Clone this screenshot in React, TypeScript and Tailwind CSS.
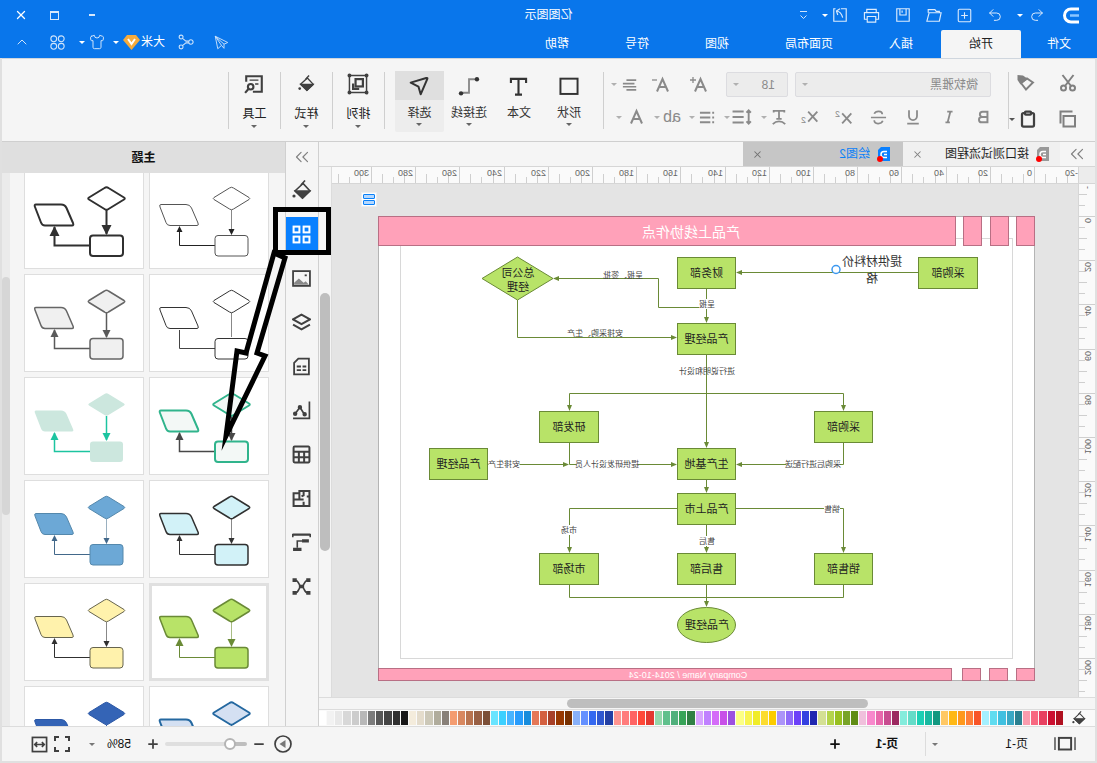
import type { ReactNode } from "react"
import { ChevronsRight, ChevronUp, Clipboard, Minus, Plus, Redo2, Shirt, Undo2, X } from "lucide-react"

const GREEN = "#b8e368"
const LINE = "#6a8a36"

const menuTabs = ["插入", "页面布局", "视图", "符号", "帮助"]

const swatches = [
  "#b01020", "#cc1030", "#e84060", "#f86880", "#fa9cae",
  "#2a8090", "#3aa8c4", "#40c0e0", "#60dcf0", "#a4f0ff",
  "#f85428", "#ff7f38", "#ff981c", "#ffb814", "#ffc864",
  "#129880", "#18b8a0", "#1ccfb4", "#64dcc8", "#84ecdc",
  "#9c2860", "#c84c90", "#e868ac", "#f888cc", "#f0c0dc",
  "#608c14", "#78a428", "#98c020", "#b4d44c", "#d4e094",
  "#2028b0", "#3440e0", "#6c40f8", "#906cf8", "#ac94f8",
  "#fccc00", "#fcdc30", "#f0ec28", "#f8f450", "#fcff84",
  "#9c50e0", "#c850e8", "#d46cf8", "#c080ff", "#d8a4ff",
  "#308044", "#38a458", "#50b07c", "#60c08c", "#94d8ac",
  "#e43830", "#ff4838", "#ff6464", "#ff7c7c", "#ff9490",
  "#2440a4", "#3058d0", "#3468f0", "#6490ff", "#88b0f8",
  "#783000", "#983800", "#a84028", "#d46040", "#e47858",
  "#188cdc", "#289cfc", "#48b4ff", "#3cd0ff", "#68e4ff",
  "#7c5038", "#986044", "#b87450", "#d88860", "#f49c70",
  "#888078", "#b0ac9c", "#ccc8b8", "#e4dccc", "#f4ecdc",
  "#181818", "#303030", "#444444", "#585858", "#7c7c7c",
  "#b8b8b8", "#cccccc", "#d8d8d8", "#e8e8e8", "#f2f2f2", "#ffffff",
]

type Theme = {
  fill: string
  stroke: string
  width: number
  line: string
  down?: string
  lineWidth?: number
  arrow?: number
  selected?: boolean
}

const themes: Theme[] = [
  { fill: "#fff", stroke: "#555", width: 1, line: "#222", down: "#888", arrow: 3 },
  { fill: "#fff", stroke: "#303030", width: 2, line: "#303030", lineWidth: 2, arrow: 5 },
  { fill: "#fff", stroke: "#333", width: 1, line: "#444", down: "#888", arrow: 0 },
  { fill: "#f0f0f0", stroke: "#666", width: 1.5, line: "#5a5a5a", lineWidth: 1.5, arrow: 4 },
  { fill: "#f3f8f6", stroke: "#30b48c", width: 2, line: "#484848", lineWidth: 1.5, arrow: 4 },
  { fill: "#cce7de", stroke: "none", width: 0, line: "#1cc4a0", lineWidth: 1.5, arrow: 4 },
  { fill: "#d2f2f8", stroke: "#303030", width: 1.5, line: "#333", down: "#888", arrow: 3 },
  { fill: "#6ca8d6", stroke: "#5488ac", width: 1, line: "#42688a", down: "#9ab0c0", arrow: 3 },
  { fill: GREEN, stroke: LINE, width: 1.5, line: LINE, down: "#a9bd84", arrow: 4, selected: true },
  { fill: "#fff2ac", stroke: "#66644e", width: 1, line: "#303030", down: "#888", arrow: 3 },
  { fill: "#d4e0f2", stroke: "#2468a0", width: 2, line: "#2468a0", arrow: 3 },
  { fill: "#3464b6", stroke: "#2c58a6", width: 1, line: "#2c58a6", arrow: 3 },
]

const nodes = [
  { x: 57, y: 41, w: 60, text: "采购部" },
  { x: 299, y: 41, w: 59, text: "财务部" },
  { x: 299, y: 107, w: 59, text: "产品经理" },
  { x: 162, y: 195, w: 59, text: "采购部" },
  { x: 436, y: 195, w: 60, text: "研发部" },
  { x: 299, y: 232, w: 59, text: "生产基地" },
  { x: 547, y: 232, w: 59, text: "产品经理" },
  { x: 299, y: 277, w: 59, text: "产品上市" },
  { x: 162, y: 337, w: 59, text: "销售部" },
  { x: 299, y: 337, w: 59, text: "售后部" },
  { x: 436, y: 337, w: 60, text: "市场部" },
]

// Connectors that end in an arrow head
const arrows = [
  "M117 56.5H298",
  "M328.5 72V106",
  "M328.5 91.5H376.5V62.5H481",
  "M517.5 84V121.5H359",
  "M328.5 139V231",
  "M328.5 177.5H191.5V194",
  "M328.5 177.5H465.5V194",
  "M191.5 226V248.5H298",
  "M547 248.5H467",
  "M465.5 226V248.5H359",
  "M328.5 263V276",
  "M299 292.5H191.5V336",
  "M358 292.5H465.5V336",
  "M328.5 308V336",
  "M328.5 368V390",
]

const labels = [
  { x: 412, y: 59, w: 0, text: "呈报、签批" },
  { x: 328, y: 88, w: 16, text: "呈报" },
  { x: 440, y: 117, w: 0, text: "安排采购、生产" },
  { x: 328, y: 155, w: 0, text: "进行说明和设计" },
  { x: 222, y: 248, w: 53, text: "采购后进行配送" },
  { x: 428, y: 248, w: 61, text: "提供研发设计人员" },
  { x: 531, y: 248, w: 31, text: "安排生产" },
  { x: 203, y: 293, w: 16, text: "销售" },
  { x: 466, y: 314, w: 16, text: "市场" },
  { x: 328, y: 325, w: 16, text: "售后" },
]

function Icon({ size = 18, width = 1.5, children, className }: { size?: number; width?: number; children: ReactNode; className?: string }) {
  return (
    <svg width={size} height={size} viewBox="0 0 18 18" fill="none" stroke="currentColor" strokeWidth={width} className={className} aria-hidden="true">
      {children}
    </svg>
  )
}

function Caret({ className = "text-[#8a8a8a]" }: { className?: string }) {
  return (
    <svg width="6" height="3" viewBox="0 0 6 3" className={`shrink-0 ${className}`} aria-hidden="true">
      <path d="M0 0H6L3 3Z" fill="currentColor" />
    </svg>
  )
}

function Logo({ className }: { className: string }) {
  return (
    <svg width="16" height="17" viewBox="0 0 16 17" fill="none" stroke="white" strokeWidth="3" className={className} aria-hidden="true">
      <path d="M0 2H8A6.5 6.5 0 0 1 8 15H0" />
      <path d="M0 8.5H9" stroke="#8cc6ff" strokeWidth="2.5" />
    </svg>
  )
}

function PaintBucket({ size = 20 }: { size?: number }) {
  return (
    <svg width={size} height={size} viewBox="0 0 20 20" fill="none" stroke="currentColor" strokeWidth="1.6" aria-hidden="true">
      <path d="M9 3.5L17 11L9.5 18L2 11Z" />
      <path d="M2.5 11H16.5L9.5 18Z" fill="currentColor" />
      <path d="M7 0.500L11 5" />
      <circle cx="18" cy="16" r="1.6" fill="currentColor" stroke="none" />
    </svg>
  )
}

function DocIcon({ color }: { color: string }) {
  return (
    <span className="relative block">
      <svg width="12" height="14" viewBox="0 0 12 14" aria-hidden="true">
        <path d="M0 0H9L12 3V14H0Z" fill={color} />
        <path d="M3 4.5H6A3 3 0 0 1 6 10.5H3M3 7.5H6" fill="none" stroke="white" strokeWidth="1.5" />
      </svg>
      <span className="absolute -right-px -bottom-px size-[6px] rounded-full bg-[#ff0000]" />
    </span>
  )
}

function TitleBar() {
  const quick: { label: string; icon: ReactNode }[] = [
    { label: "重做", icon: <Redo2 size={16} strokeWidth={1.5} /> },
    { label: "新建", icon: <Icon size={15} width={1.3}><rect x="1.5" y="1.5" width="15" height="15" rx="1.5" /><path d="M9 5V13M5 9H13" /></Icon> },
    { label: "打开", icon: <Icon size={16} width={1.3}><path d="M15.500 6.500V3H8L6.500 5H3V6.500M1 6.500H14.500L17 16H3Z" /></Icon> },
    { label: "保存", icon: <Icon size={16} width={1.3}><path d="M2 2H16V16H2ZM5.500 2V9H12.500V2M10 4V6.500" /></Icon> },
    { label: "打印", icon: <Icon size={17} width={1.2}><path d="M4 6V2.500H14V6M4 13H1.500V6H16.500V13H14M4.500 10H13.500V16H4.500Z" /></Icon> },
    { label: "导出", icon: <Icon size={16} width={1.3}><path d="M8 2H2V16H16V2H14M6 12C7 8 9 5 13 4.500M9 2L13 4.500L11.500 9" /></Icon> },
  ]
  return (
    <header className="bg-[#0976eb] text-white">
      <div className="relative flex h-[30px] items-center">
        <Logo className="ml-[18px]" />
        <button aria-label="撤销" className="ml-[18px] text-[#dcebfd]"><Undo2 size={16} strokeWidth={1.5} /></button>
        <Caret className="ml-1.5 text-white" />
        <div className="ml-[14px] flex items-center gap-[15px] text-[#dcebfd]">
          {quick.map((q) => (
            <button key={q.label} aria-label={q.label}>{q.icon}</button>
          ))}
        </div>
        <Caret className="ml-1 text-white" />
        <button aria-label="自定义" className="ml-[14px]">
          <svg width="9" height="9" viewBox="0 0 9 9" fill="none" stroke="#cfe4fb" aria-hidden="true"><path d="M1 .5H8M1.500 4.500L4.500 7.500L7.500 4.500" /></svg>
        </button>
        <h1 className="pointer-events-none absolute inset-x-0 text-center text-[12px]">亿图图示</h1>
        <div className="ml-auto flex items-center gap-[22px] pr-[14px]">
          <button aria-label="最小化" className="mr-1 h-0.5 w-1.5 bg-[#d6e8fc]" />
          <button aria-label="最大化" className="ml-1 size-[9px] border border-t-2 border-[#d6e8fc]" />
          <button aria-label="关闭"><X size={14} strokeWidth={2.200} /></button>
        </div>
      </div>
      <div className="flex h-7 items-center text-[12px]">
        <nav className="flex h-full">
          <a href="#" className="flex w-[76px] items-center justify-center">文件</a>
          <a href="#" className="flex w-20 items-center justify-center rounded-t-[2px] bg-[#f5f5f5] text-[#222]">开始</a>
          {menuTabs.map((t) => (
            <a key={t} href="#" className="flex items-center px-7">{t}</a>
          ))}
        </nav>
        <div className="mb-1 ml-auto flex items-center pr-[14px] text-[#cfe4fb]">
          <button aria-label="发送"><Icon size={15} width={1.1}><path d="M16.500 1.500L1.500 9L6 11V16L9 12.500L13.500 16.500ZM6 11L16.500 1.500L9 12.500" /></Icon></button>
          <button aria-label="分享" className="ml-5"><Icon size={16} width={1.200}><circle cx="3.500" cy="9" r="2.500" /><circle cx="14.500" cy="3.500" r="2.200" /><circle cx="14.500" cy="14.500" r="2.200" /><path d="M6 8L9 8L13 5M6 10H9L13 13" /></Icon></button>
          <button className="ml-[13px] flex items-center text-white">
            大米
            <svg width="17" height="15" viewBox="0 0 17 15" className="ml-px" aria-hidden="true">
              <path d="M4 0H13L17 5L8.500 15L0 5Z" fill="#f6ab3c" />
              <path d="M5 4L8.500 9L12 4" fill="none" stroke="white" strokeWidth="2" />
            </svg>
          </button>
          <Caret className="ml-1 text-white" />
          <button aria-label="皮肤" className="ml-2"><Shirt size={16} strokeWidth={1.500} /></button>
          <Caret className="ml-1 text-white" />
          <button aria-label="应用" className="ml-[14px]"><Icon size={15} width={1.300}><circle cx="4.500" cy="4.500" r="3.500" /><circle cx="13.500" cy="4.500" r="3.500" /><circle cx="4.500" cy="13.500" r="3.500" /><circle cx="13.500" cy="13.500" r="3.500" /></Icon></button>
          <button aria-label="收起" className="ml-5"><ChevronUp size={16} strokeWidth={1.500} /></button>
        </div>
      </div>
    </header>
  )
}

function LetterA({ sign }: { sign?: string }) {
  return (
    <Icon width={1.300}>
      <path d="M2 15.500L7.500 3L13 15.500M4 11H11" strokeWidth="2" />
      {sign === "+" && <path d="M12 4H18M15 1V7" />}
      {sign === "-" && <path d="M13 4H18" />}
    </Icon>
  )
}

const bigButtons = [
  { label: "形状", caret: true, icon: <Icon size={22} width={1.600}><rect x="2" y="3" width="14" height="12.500" /></Icon> },
  { label: "文本", caret: false, icon: <Icon size={21} width={1.800}><path d="M2.500 6V2.500H15.500V6M9 2.500V16M6 16H12" /></Icon> },
  { label: "连接线", caret: true, icon: <Icon size={22} width={1.500}><path d="M4 3.500H9V14.500H14" stroke="#888" /><circle cx="2.500" cy="3.500" r="1.800" fill="currentColor" stroke="none" /><circle cx="15.500" cy="15" r="1.800" fill="currentColor" stroke="none" /></Icon> },
]

const groupButtons = [
  { label: "排列", icon: <Icon size={22} width={1.200}><path d="M2 2H16V16H2Z" /><rect x="5" y="5" width="6" height="6" strokeWidth="1.800" /><path d="M13 8.500V13H8" strokeWidth="1.800" /><circle cx="2" cy="2" r="1" /><circle cx="16" cy="2" r="1" /><circle cx="2" cy="16" r="1" /><circle cx="16" cy="16" r="1" /></Icon> },
  { label: "样式", icon: <PaintBucket size={17} /> },
  { label: "工具", icon: <Icon size={20} width={1.900}><path d="M10 16H2V2H16V7" /><path d="M5 5.500H13M5 9H8" strokeWidth="1.300" /><circle cx="12" cy="11.500" r="2.500" /><path d="M14 13.500L17 17" /></Icon> },
]

function Divider() {
  return <div className="h-[57px] w-px bg-[#cfcfcf]" />
}

function Ribbon() {
  return (
    <section className="flex h-[84px] shrink-0 border-t border-b border-t-[#cfd6de] border-b-[#cfcfcf] bg-[#f5f5f5] pt-[13px] text-[12px] text-[#404040]">
      <div className="grid h-[57px] w-[86px] grid-cols-[1fr_1fr] content-between justify-items-start pt-0.5 pb-px pl-[18px] text-[#808080]">
        <button aria-label="剪切"><Icon size={18} width={2}><path d="M3.500 1L12 12M14.500 1L6 12" /><circle cx="4.500" cy="14" r="2.500" /><circle cx="13.500" cy="14" r="2.500" /></Icon></button>
        <button aria-label="格式刷" className="ml-2">
          <Icon size={18}><path d="M2 8.500L8 4.500L14 9L9 15.500Z" strokeWidth="2" /><path d="M7 5L12 1.500L17.500 1V6L14.500 10.500Z" fill="currentColor" stroke="none" /></Icon>
        </button>
        <button aria-label="复制"><Icon size={18} width={2}><path d="M4.500 6H13.500V16.500H2V6Z" /><path d="M4.500 1.500H16.500V13.500" /></Icon></button>
        <button aria-label="粘贴" className="ml-1.5 flex items-center gap-1 text-[#404040]"><Clipboard size={18} strokeWidth={3} /><Caret className="text-[#555]" /></button>
      </div>
      <Divider />
      <div className="flex h-[57px] w-[404px] flex-col justify-between pl-[17px] text-[#8a8a8a]">
        <div className="flex items-center">
          <div className="relative">
            <select aria-label="字体" className="h-[25px] w-[196px] appearance-none rounded-[2px] border border-[#dcdce0] bg-[#ececec] pl-3">
              <option>微软雅黑</option>
            </select>
            <Caret className="absolute top-[11px] right-[7px] text-[#b0b0b0]" />
          </div>
          <div className="relative ml-[7px]">
            <select aria-label="字号" className="h-[25px] w-[62px] appearance-none rounded-[2px] border border-[#dcdce0] bg-[#ececec] pl-3">
              <option>18</option>
            </select>
            <Caret className="absolute top-[11px] right-[7px] text-[#b0b0b0]" />
          </div>
          <button aria-label="增大字号" className="ml-[18px]"><LetterA sign="+" /></button>
          <button aria-label="减小字号" className="ml-5"><LetterA sign="-" /></button>
          <button aria-label="对齐" className="ml-[14px] flex items-center gap-[5px]"><Icon size={16} width={1.800}><path d="M2 3.500H13M4 7.500H17M2 11H17M2 14.500H13" /></Icon><Caret className="text-[#b0b0b0]" /></button>
        </div>
        <div className="flex h-6 items-center">
          <button aria-label="加粗" className="w-4"><Icon size={16} width={2.200}><path d="M4 3H9.500A3 3 0 0 1 9.500 9H4ZM4 9H10.500A3 3 0 0 1 10.500 15H4Z" /></Icon></button>
          <button aria-label="斜体" className="ml-[18px]"><Icon size={16} width={2}><path d="M5 3H11M7.500 3L10.500 15M8 15H13" /></Icon></button>
          <button aria-label="下划线" className="ml-5"><Icon size={16} width={2}><path d="M4.500 1.500V8A4.500 4.500 0 0 0 13.500 8V1.500M2.500 16.500H15.500" /></Icon></button>
          <button aria-label="删除线" className="ml-[18px]"><Icon size={17} width={1.800}><path d="M13.500 5C12 1.500 5 1.500 5 5.500M1 9H17M4.500 12.500C6 16.500 13.500 16.500 13.500 12" /></Icon></button>
          <button aria-label="上标" className="ml-[17px] flex w-5 items-start"><Icon size={15} width={2.200}><path d="M2 4L13 16M13 4L2 16" /></Icon><span className="-ml-0.5 text-[9px] leading-none">2</span></button>
          <button aria-label="下标" className="ml-[14px] flex w-5 items-end"><Icon size={15} width={2.200}><path d="M2 2L13 14M13 2L2 14" /></Icon><span className="-ml-0.5 text-[9px] leading-none">2</span></button>
          <button aria-label="文字样式" className="ml-3 flex items-center gap-1"><Icon size={16} width={2}><path d="M3 4V2H15V4M9 2V11M6 11H12M2 17C6 13 12 13 16 17" /></Icon><Caret className="text-[#b0b0b0]" /></button>
          <button aria-label="行距" className="ml-[9px] flex items-center gap-0.5"><Icon size={20} width={1.700}><path d="M3 3V15M1 5L3 3L5 5M1 13L3 15L5 13M7.500 4H17.500M7.500 9H17.500M7.500 14H17.500" /></Icon><Caret className="text-[#b0b0b0]" /></button>
          <button aria-label="列表" className="ml-2 flex items-center gap-1"><Icon size={17} width={2}><path d="M2 4H4M2 9H4M2 14H4M6 4H17M6 9H17M6 14H17" /></Icon><Caret className="text-[#b0b0b0]" /></button>
          <button aria-label="大小写" className="ml-2 flex items-center gap-[3px]"><span className="text-[16px] leading-none">ab</span><Caret className="text-[#b0b0b0]" /></button>
          <button aria-label="字体颜色" className="ml-2.5 flex items-center gap-1"><LetterA /><Caret className="text-[#b0b0b0]" /></button>
        </div>
      </div>
      <Divider />
      <div className="flex pl-[9px]">
        {bigButtons.map((b) => (
          <button key={b.label} className="flex h-[60px] w-[50px] flex-col items-center pt-[3px] text-[#333]">
            <span className="flex h-[22px] items-center">{b.icon}</span>
            <span className="mt-2 leading-4">{b.label}</span>
            {b.caret && <Caret className="mt-0.5 text-[#666]" />}
          </button>
        ))}
        <button className="-mt-px flex h-[61px] w-[49px] flex-col items-center rounded-[2px] bg-[#ededed] text-[#333]">
          <span className="flex h-[29px] w-full items-center justify-center bg-[#dfdfdf]">
            <Icon size={20} width={1.800}><path d="M1.500 2.500Q1 1.500 2.500 1.800L16.500 6L9.500 9.500L7.500 16.500Z" strokeLinejoin="round" /></Icon>
          </span>
          <span className="mt-[5px] leading-4">选择</span>
          <Caret className="mt-0.5 text-[#666]" />
        </button>
      </div>
      <div className="flex pl-[10px]">
        {groupButtons.map((b) => (
          <div key={b.label} className="flex">
            <Divider />
            <button className="flex h-[57px] w-[51px] flex-col items-center text-[#222]">
              <span className="flex h-[23px] items-center text-[#404040]">{b.icon}</span>
              <span className="mt-[11px] leading-4">{b.label}</span>
              <Caret className="mt-[3px] text-[#666]" />
            </button>
          </div>
        ))}
        <Divider />
      </div>
    </section>
  )
}

function DocumentTabs() {
  return (
    <div className="flex h-[25px] shrink-0 border-b border-[#d6d6d6] bg-[#f5f5f5] text-[12px]">
      <button aria-label="展开" className="flex w-[35px] items-center justify-center text-[#808080]"><ChevronsRight size={22} strokeWidth={1.300} /></button>
      <div className="flex w-[157px] items-center bg-[#f0f0f0] pl-[11px] text-[#222]">
        <DocIcon color="#999" />
        <span className="ml-2">接口测试流程图</span>
        <button aria-label="关闭标签" className="mr-[9px] ml-auto text-[#808080]"><X size={11} strokeWidth={2.200} /></button>
      </div>
      <div className="flex w-40 items-center bg-[#c6c6c6] pl-[13px] text-[#0980f8]">
        <DocIcon color="#0980ff" />
        <span className="ml-2">绘图2</span>
        <button aria-label="关闭标签" className="mr-[9px] ml-auto text-[#707070]"><X size={11} strokeWidth={2.200} /></button>
      </div>
    </div>
  )
}

// Ruler marks: a long one every 20 units, shorter ones every 5
function HorizontalRuler() {
  const marks = Array.from({ length: 69 }, (_, i) => i - 4)
  return (
    <svg width="100%" height="16" className="block min-w-0 flex-1 bg-[#fafafa]" aria-hidden="true">
      {marks.map((i) => {
        const x = Math.round(43 + i * 11.050) + 0.5
        const top = i % 4 === 0 ? 0 : i % 2 === 0 ? 10 : 7
        return <path key={i} d={`M${x} ${top}V16`} stroke="#cfcfcf" />
      })}
      {marks.filter((i) => i % 4 === 0 && i <= 60).map((i) => (
        <text key={i} x={Math.round(43 + i * 11.050) + (i < 0 ? 1 : 3)} y="9" fontSize="9" fill="#666">{i * 5}</text>
      ))}
    </svg>
  )
}

function VerticalRuler() {
  const marks = Array.from({ length: 46 }, (_, i) => i - 2)
  return (
    <svg width="17" height="100%" className="block shrink-0 border-r border-[#d6d6d6] bg-[#fafafa]" aria-hidden="true">
      <text transform="translate(10 5) rotate(-90)" fontSize="9" fill="#666">-</text>
      {marks.map((i) => {
        const y = Math.round(32 + i * 11.050) + 0.5
        const left = i % 4 === 0 ? 0 : i % 2 === 0 ? 8 : 10
        return <path key={i} d={`M${left} ${y}H17`} stroke="#cfcfcf" />
      })}
      {marks.filter((i) => i % 4 === 0 && i <= 40).map((i) => (
        <text key={i} transform={`translate(10 ${Math.round(32 + i * 11.050) + 2}) rotate(-90)`} fontSize="9" textAnchor="end" fill="#666">{i * 5}</text>
      ))}
    </svg>
  )
}

function Diagram() {
  return (
    <svg width="657" height="466" viewBox="0 0 657 466" className="absolute top-[32px] left-[43px]" fill="none" role="img" aria-label="产品上线协作点">
      <defs>
        <marker id="head" viewBox="0 0 6 6" refX="5" refY="3" markerWidth="6" markerHeight="6" markerUnits="userSpaceOnUse" orient="auto">
          <path d="M0 0.500L6 3L0 5.500Z" fill={LINE} />
        </marker>
      </defs>
      <rect x="0.500" y="0.500" width="656" height="464" fill="white" stroke="#b4b4b4" />
      <rect x="22.500" y="22.500" width="612" height="420" stroke="#d8d8d8" />
      <g fill="#ffa1b9" stroke="#b86f84">
        {[0, 26, 53].map((x) => <rect key={x} x={x + 0.500} y="0.500" width="18" height="29" />)}
        <rect x="79.500" y="0.500" width="577" height="29" />
        {[0, 27, 54].map((x) => <rect key={x} x={x + 0.500} y="452.500" width="18" height="12" />)}
        <rect x="83.500" y="452.500" width="573" height="12" />
      </g>
      <g stroke={LINE}>
        {arrows.map((d) => <path key={d} d={d} markerEnd="url(#head)" />)}
        <path d="M191.500 368V381.500H465.500V368" />
        <g fill={GREEN}>
          {nodes.map((n) => <rect key={`${n.x}-${n.y}`} x={n.x + 0.500} y={n.y + 0.500} width={n.w - 1} height="31" />)}
          <path d="M482 62.500L517.500 41L553 62.500L517.500 84Z" />
          <ellipse cx="328.500" cy="409" rx="29" ry="17.500" />
        </g>
      </g>
      <g textAnchor="middle" dominantBaseline="central">
        <g fill="#222" fontSize="11">
          {nodes.map((n) => <text key={`${n.x}-${n.y}`} x={n.x + n.w / 2} y={n.y + 16}>{n.text}</text>)}
          <text x="517" y="57">总公司</text>
          <text x="517" y="71">经理</text>
          <text x="328" y="409">产品经理</text>
        </g>
        <g fill="#444" fontSize="8">
          {labels.map((l) => (
            <g key={l.text}>
              {l.w > 0 && <rect x={l.x - l.w / 2} y={l.y - 5} width={l.w} height="10" fill="white" />}
              <text x={l.x} y={l.y}>{l.text}</text>
            </g>
          ))}
        </g>
        <g fill="#333" fontSize="12">
          <text x="163" y="46">提供材料价</text>
          <text x="163" y="63">格</text>
        </g>
        <g fill="white">
          <text x="344" y="16" fontSize="14">产品上线协作点</text>
          <text x="347" y="459" fontSize="9">Company Name / 2014-10-24</text>
        </g>
      </g>
      <circle cx="199" cy="53.500" r="4" fill="white" stroke="#3c98f0" strokeWidth="1.500" />
    </svg>
  )
}

function Palette() {
  return (
    <div className="flex h-[17px] shrink-0 items-center border-t border-[#dcdcdc] bg-[#fafafa] pl-[9px]">
      <button aria-label="填充" className="w-[23px] shrink-0 text-[#404040]"><PaintBucket size={14} /></button>
      <div className="flex h-[14px] flex-1 gap-px">
        {swatches.map((c) => <span key={c} className="flex-1" style={{ backgroundColor: c }} />)}
      </div>
    </div>
  )
}

function Workspace() {
  return (
    <main className="flex min-w-0 flex-1 flex-col">
      <DocumentTabs />
      <div className="flex min-h-0 flex-1">
        <div className="flex min-w-0 flex-1 flex-col">
          <div className="flex border-b border-[#d6d6d6]">
            <div className="w-[17px] border-r border-[#d6d6d6] bg-[#ececec]" />
            <HorizontalRuler />
          </div>
          <div className="flex min-h-0 flex-1">
            <VerticalRuler />
            <div className="relative flex-1 overflow-hidden bg-[#e4e4e4]">
              <Diagram />
              <button aria-label="页面选项" className="absolute top-2 left-[701px] flex h-[15px] w-4 flex-col justify-between border border-[#eee] bg-white p-px">
                <span className="h-[5px] w-full rounded-[1px] border border-[#0980f8] bg-[#b4d8ff]" />
                <span className="h-[5px] w-full rounded-[1px] border border-[#0980f8] bg-[#b4d8ff]" />
              </button>
            </div>
          </div>
        </div>
        <div className="flex w-[13px] justify-center border-l border-[#dcdcdc] bg-[#f5f5f5] pt-[126px]">
          <div className="h-[258px] w-[10px] rounded-full bg-[#bebebe]" />
        </div>
      </div>
      <div className="flex h-3 shrink-0 items-center border-t border-[#dcdcdc] bg-[#f5f5f5] pl-[227px]">
        <div className="h-[9px] w-[301px] rounded-full bg-[#bebebe]" />
      </div>
      <Palette />
    </main>
  )
}

const sideTools = [
  { label: "填充", icon: <PaintBucket /> },
  { label: "主题", active: true, icon: <Icon size={19} width={1.900}><rect x="1.500" y="1.500" width="5.500" height="5.500" /><rect x="11" y="1.500" width="5.500" height="5.500" /><rect x="1.500" y="11" width="5.500" height="5.500" /><rect x="11" y="11" width="5.500" height="5.500" /></Icon> },
  { label: "图片", icon: <Icon size={19} width={1.700}><rect x="1" y="2" width="16" height="14" /><path d="M2 15L5 11.500L7 13L11.500 9L16 13V15Z" fill="#888" stroke="none" /><path d="M4 6H6" /></Icon> },
  { label: "图层", icon: <Icon size={19} width={1.900}><path d="M9 1.500L17 6L9 10.500L1 6ZM1 11L9 15.500L17 11" /></Icon> },
  { label: "备注", icon: <Icon size={19} width={1.700}><path d="M2 1.500H12L16 5.500V16.500H2ZM4.500 9H8M9.500 9H13.500M4.500 12.500H8M9.500 12.500H13.500" /></Icon> },
  { label: "图表", icon: <Icon size={19} width={1.600}><path d="M1.500 0.500V16.500H17M6 13L10.500 6L15 12" /><circle cx="6" cy="12.500" r="1.300" fill="currentColor" /><circle cx="10.500" cy="6" r="1.300" fill="currentColor" /><circle cx="15" cy="12" r="1.300" fill="currentColor" /></Icon> },
  { label: "表格", icon: <Icon size={19} width={1.900}><rect x="1.500" y="1.500" width="15" height="15" rx="1" /><path d="M1.500 6.500H16.500M1.500 11.500H16.500M6.500 6.500V16.500M11.500 6.500V16.500" /></Icon> },
  { label: "平面图", icon: <Icon size={19} width={1.900}><path d="M7 2H1.500V16H16.500V4H11V2H7M1.500 7H4M7 2V6L9 7M11 4V10H7M11 10H14M7 12V16M14 10H16.500" /></Icon> },
  { label: "甘特图", icon: <Icon size={19} width={1.500}><path d="M0.500 1.500H17.500M0.500 1V4M17.500 1V4" strokeWidth="2" /><path d="M8.500 7.500H13V14" /><path d="M2 7.500H8.500M9 15.500H17" strokeWidth="3" /></Icon> },
  { label: "思维导图", icon: <Icon size={19} width={1.500}><path d="M3 3C7 3 6 9 9 9S11 3 15 3M3 15C7 15 6 9 9 9S11 15 15 15" /><path d="M0.500 3H4.500M0.500 15H4.500M13.500 3H17.500M13.500 15H17.500M6.500 9H11.500" strokeWidth="3.500" /></Icon> },
]

function SideToolbar() {
  return (
    <aside className="flex w-[34px] shrink-0 flex-col border-x border-[#d0d0d0] bg-[#f5f5f5]">
      <button aria-label="折叠" className="flex h-[26px] shrink-0 items-center justify-center pt-1 text-[#808080]"><ChevronsRight size={22} strokeWidth={1.300} /></button>
      {sideTools.map((t) => (
        <button
          key={t.label}
          aria-label={t.label}
          className={t.active ? "my-[5px] flex h-[34px] items-center justify-center bg-[#0980ff] text-white" : "flex h-11 items-center justify-center text-[#404040]"}
        >
          {t.icon}
        </button>
      ))}
    </aside>
  )
}

function ThemeCard({ theme }: { theme: Theme }) {
  const a = theme.arrow ?? 3
  return (
    <button aria-label="主题样式" className={theme.selected ? "h-[98px] border border-[#e0e0e0] bg-white outline-2 -outline-offset-3 outline-[#e0e0e0]" : "h-[98px] border border-[#dedede] bg-white"}>
      <svg width="118" height="96" viewBox="1 1 118 96" fill="none" aria-hidden="true">
        <path d="M37.500 39V63" stroke={theme.down ?? theme.line} strokeWidth={theme.lineWidth ?? 1} />
        <path d="M54 74.500H89.500V56" stroke={theme.line} strokeWidth={theme.lineWidth ?? 1} />
        <g fill={theme.fill} stroke={theme.stroke} strokeWidth={theme.width} strokeLinejoin="round">
          <path d="M35.500 17Q37.500 15.500 39.500 17L55 26.500Q56.500 27.500 55 28.500L39.500 38Q37.500 39.500 35.500 38L20 28.500Q18.500 27.500 20 26.500Z" />
          <path d="M83 33.500H108Q110 33.500 109 36L103 51.500Q102 54.500 99 54.500H72Q70 54.500 71 52L77.500 37Q79 33.500 83 33.500Z" />
          <rect x="21" y="64.500" width="33" height="20.500" rx="3" />
        </g>
        {a > 0 && <path d={`M${37.500 - a} ${64 - a * 2}H${37.500 + a}L37.500 64ZM${89.500 - a} ${55 + a * 2}H${89.500 + a}L89.500 55Z`} fill={theme.line} />}
      </svg>
    </button>
  )
}

function ThemePanel() {
  return (
    <section className="flex w-[283px] shrink-0 flex-col bg-[#f5f5f5]">
      <h2 className="flex h-[31px] shrink-0 items-center justify-center bg-[#dfdfdf] text-[12px] font-bold text-[#111]">主题</h2>
      <div className="flex min-h-0 flex-1 overflow-hidden">
        <div className="-mt-0.5 grid h-max grid-cols-[120px_120px] gap-[5px] pl-4">
          {themes.map((t, i) => <ThemeCard key={i} theme={t} />)}
        </div>
        <div className="ml-auto w-2 bg-[#ebebeb] pt-26">
          <div className="h-[238px] rounded-full bg-[#d6d6d6]" />
        </div>
      </div>
    </section>
  )
}

function StatusBar() {
  return (
    <footer className="flex h-[35px] shrink-0 items-center border-t border-[#dcdcdc] bg-[#f5f5f5] text-[12px] text-[#111]">
      <button aria-label="页面视图" className="ml-[19px] text-[#404040]"><Icon size={22} width={1.600}><rect x="4" y="4" width="10" height="9.500" /><path d="M0.800 3.500V14M17.200 3.500V14" stroke="#777" /></Icon></button>
      <button className="ml-[26px] flex items-center">页-1</button>
      <Caret className="ml-[67px] text-[#777]" />
      <div className="ml-1.5 h-6 w-px bg-[#dcdcdc]" />
      <button className="ml-[27px] font-bold">页-1</button>
      <button aria-label="添加页面" className="ml-[34px]"><Plus size={14} strokeWidth={3} /></button>
      <div className="ml-auto flex items-center pr-[29px] text-[#404040]">
        <button aria-label="播放"><Icon size={18} width={1.700}><circle cx="9" cy="9" r="8" /><path d="M6.500 5L12.500 9L6.500 13Z" fill="#777" stroke="none" /></Icon></button>
        <button aria-label="缩小" className="ml-2"><Minus size={14} strokeWidth={3} /></button>
        <input
          aria-label="缩放"
          type="range"
          defaultValue={15}
          className="mx-[5px] h-1 w-[82px] appearance-none rounded-full bg-[linear-gradient(to_right,#bebebe_18%,#dfdfdf_18%)] [&::-webkit-slider-thumb]:size-3 [&::-webkit-slider-thumb]:appearance-none [&::-webkit-slider-thumb]:rounded-full [&::-webkit-slider-thumb]:border-2 [&::-webkit-slider-thumb]:border-[#b4b4b4] [&::-webkit-slider-thumb]:bg-white"
        />
        <button aria-label="放大"><Plus size={14} strokeWidth={3} /></button>
        <span className="ml-[15px] w-[26px] text-[#111]">58%</span>
        <Caret className="ml-[10px] text-[#777]" />
        <button aria-label="全屏" className="ml-[18px]"><Icon size={18} width={2}><path d="M2 6V2H6M12 2H16V6M16 12V16H12M6 16H2V12" /></Icon></button>
        <button aria-label="适合宽度" className="ml-[5px]"><Icon size={17} width={1.800}><rect x="1.500" y="1.500" width="15" height="15" /><path d="M4 9H14M6.500 6.500L4 9L6.500 11.500M11.500 6.500L14 9L11.500 11.500" /></Icon></button>
      </div>
    </footer>
  )
}

export default function App() {
  return (
    <div className="relative flex h-screen -scale-x-100 flex-col overflow-hidden bg-[#e0e0e0] font-['Liberation_Sans','Noto_Sans_CJK_SC',sans-serif] leading-normal">
      <TitleBar />
      <div className="flex min-h-0 flex-1 flex-col border-x-2 border-b-2 border-[#e0e0e0]">
        <Ribbon />
        <div className="flex min-h-0 flex-1">
          <Workspace />
          <SideToolbar />
          <ThemePanel />
        </div>
        <StatusBar />
      </div>
      {/* Callout from the theme tool to its card */}
      <svg width="120" height="260" viewBox="0 0 120 260" className="pointer-events-none absolute top-[200px] right-[215px]" fill="none" stroke="black" strokeWidth="5" strokeMiterlimit="20" aria-hidden="true">
        <rect x="6.500" y="9.500" width="53" height="43" />
        <path d="M61 53L50 58L78 153L70 156L109 236L98 151L89 153Z" />
      </svg>
    </div>
  )
}
